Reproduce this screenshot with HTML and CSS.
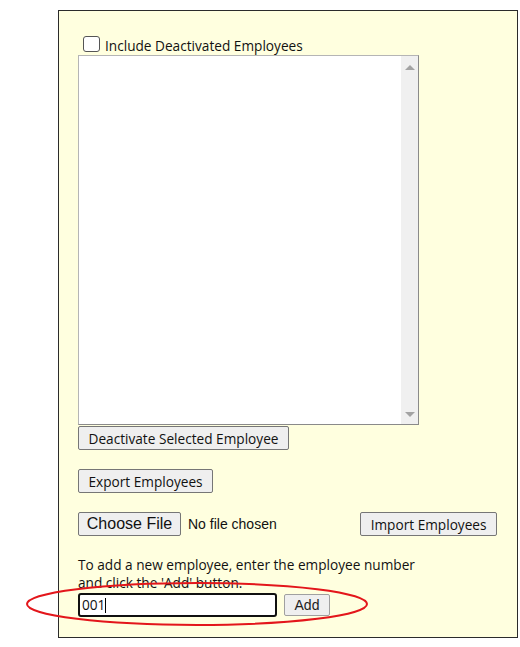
FILE: index.html
```html
<!DOCTYPE html>
<html>
<head>
<meta charset="utf-8">
<link rel="stylesheet" href="styles.css">
</head>
<body>
<div class="panel">
  <label class="check-row"><span class="checkbox"></span><span class="check-label">Include Deactivated Employees</span></label>
  <div class="listbox">
    <div class="list-items"></div>
    <div class="scrollbar">
      <span class="arrow up"></span>
      <span class="arrow down"></span>
    </div>
  </div>
  <div class="row first"><button class="btn">Deactivate Selected Employee</button></div>
  <div class="row"><button class="btn">Export Employees</button></div>
  <div class="row file-row">
    <div class="file-input"><button class="file-btn">Choose File</button><span class="file-status">No file chosen</span></div>
    <button class="btn">Import Employees</button>
  </div>
  <p class="hint">To add a new employee, enter the employee number<br>and click the 'Add' button.</p>
  <div class="add-row">
    <div class="text-input">001<span class="caret"></span></div>
    <button class="add-btn">Add</button>
  </div>
</div>
<svg class="annotation" width="344" height="46" viewBox="0 0 344 46">
  <ellipse cx="172" cy="23" rx="170" ry="21" fill="none" stroke="#e3161b" stroke-width="2"/>
</svg>
</body>
</html>
```
FILE: styles.css
```css
html, body {
  margin: 0;
  padding: 0;
  background: #ffffff;
}
body {
  position: relative;
  width: 520px;
  height: 647px;
  font-family: "Open Sans", "Noto Sans", sans-serif;
  font-size: 13.65px;
  color: #111;
}
.panel {
  box-sizing: border-box;
  margin: 10px 0 0 58px;
  width: 460px;
  height: 628px;
  border: 1px solid #2b2b2b;
  background: #ffffdf;
  padding: 24px 0 0 19px;
  display: flex;
  flex-direction: column;
  align-items: flex-start;
}
.check-row {
  display: flex;
  align-items: flex-end;
  height: 20px;
  margin-left: 5px;
}
.checkbox {
  box-sizing: border-box;
  width: 17px;
  height: 16px;
  border: 1px solid #555;
  border-radius: 3px;
  background: #fff;
  margin-bottom: 3px;
}
.check-label {
  margin-left: 5px;
  line-height: 18px;
}
.listbox {
  box-sizing: border-box;
  width: 341px;
  height: 370px;
  border: 1px solid #8a8a8a;
  border-top-color: #b5b5b5;
  border-left-color: #b5b5b5;
  background: #fff;
  display: flex;
  justify-content: flex-end;
}
.scrollbar {
  width: 17px;
  height: 100%;
  background: #f0f0f0;
  display: flex;
  flex-direction: column;
  justify-content: space-between;
  align-items: center;
  padding: 9px 0 7px;
  box-sizing: border-box;
}
.arrow {
  width: 0;
  height: 0;
  border-left: 5px solid transparent;
  border-right: 5px solid transparent;
}
.arrow.up { border-bottom: 5px solid #a3a3a3; }
.arrow.down { border-top: 5px solid #a3a3a3; }
.row {
  margin-top: 19px;
  display: flex;
}
.row.first { margin-top: 1px; }
.btn {
  box-sizing: border-box;
  height: 24px;
  padding: 0 9.5px;
  font-family: "Open Sans", "Noto Sans", sans-serif;
  font-size: 13.65px;
  color: #111;
  background: #efefef;
  border: 1px solid #767676;
  border-radius: 2px;
}
.file-row {
  width: 419px;
  justify-content: space-between;
  align-items: center;
}
.file-input {
  display: flex;
  align-items: center;
}
.file-btn {
  box-sizing: border-box;
  height: 24px;
  width: 103px;
  padding: 0;
  font-family: "Liberation Sans", Arial, sans-serif;
  font-size: 16px;
  color: #111;
  background: #efefef;
  border: 1px solid #767676;
  border-radius: 2px;
}
.file-status {
  margin-left: 7px;
  font-family: "Liberation Sans", Arial, sans-serif;
  font-size: 14px;
}
.hint {
  margin: 20px 0 0;
  line-height: 18px;
}
.add-row {
  display: flex;
  align-items: center;
  margin-top: 1px;
}
.text-input {
  box-sizing: border-box;
  width: 199px;
  height: 24px;
  border: 2px solid #101010;
  border-radius: 3px;
  background: #fff;
  padding: 0 2px;
  line-height: 20px;
  display: flex;
  align-items: center;
}
.caret {
  width: 1px;
  height: 15px;
  background: #000;
}
.add-btn {
  box-sizing: border-box;
  margin-left: 7px;
  width: 46px;
  height: 22px;
  padding: 0;
  font-family: "Liberation Sans", Arial, sans-serif;
  font-size: 14px;
  color: #222;
  background: #efefef;
  border: 1px solid #a0a0a0;
  border-radius: 2px;
}
.annotation {
  position: absolute;
  left: 25px;
  top: 581px;
}
```
